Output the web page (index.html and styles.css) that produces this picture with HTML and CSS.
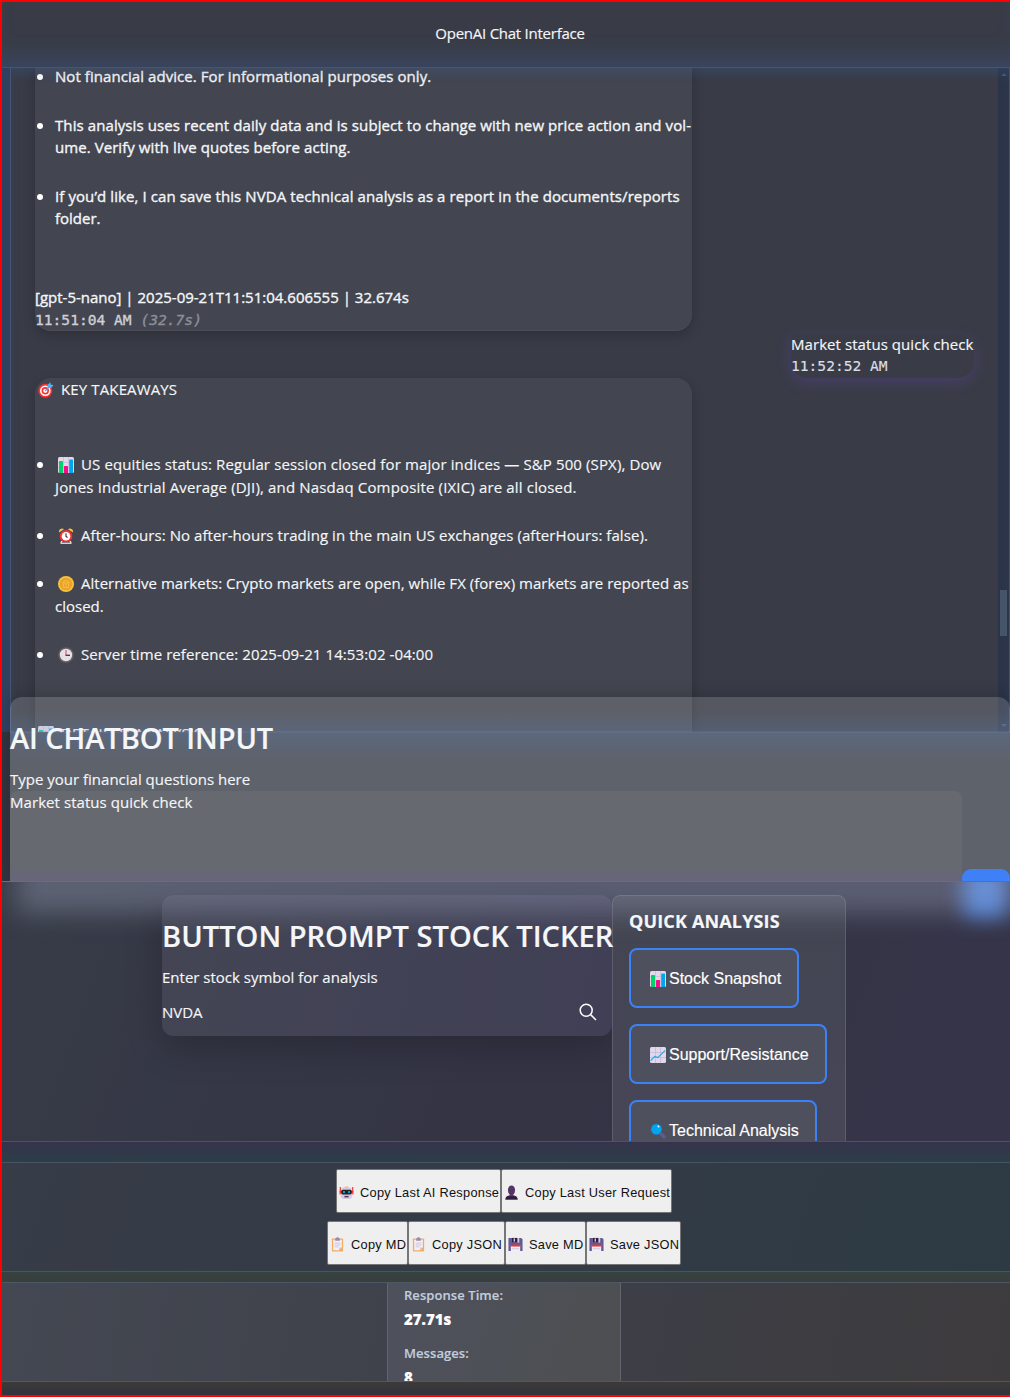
FILE: index.html
```html
<!DOCTYPE html>
<html lang="en">
<head>
<meta charset="utf-8">
<title>OpenAI Chat Interface</title>
<link rel="stylesheet" href="styles.css">
</head>
<body>
<svg class="sprite" aria-hidden="true">
  <symbol id="i-bars" viewBox="0 0 16 16"><rect width="16" height="16" rx="1.5" fill="#e1d8ec"/><path d="M0 5.5h16M0 10.5h16M5.5 0v16M10.5 0v16" stroke="#c3b4d4" stroke-width=".6"/><rect x="1" y="4" width="4" height="12" rx=".6" fill="#00d26a"/><rect x="6" y="9" width="4" height="7" rx=".6" fill="#f70a8d"/><rect x="11.2" y="2.5" width="3.8" height="13.5" rx=".6" fill="#00a6ed"/></symbol>
  <symbol id="i-trend" viewBox="0 0 16 16"><rect width="16" height="16" rx="1.5" fill="#e1d8ec"/><path d="M0 5.5h16M0 10.5h16M5.5 0v16M10.5 0v16" stroke="#c3b4d4" stroke-width=".7"/><path d="M.6 13.6 4.8 9.4l3 1.2 7.4-7.2" fill="none" stroke="#2aa5e0" stroke-width="1.2"/></symbol>
  <symbol id="i-lens" viewBox="0 0 16 16"><path d="m10.500 10.500 3.500 3.300" stroke="#635994" stroke-width="3.4" stroke-linecap="round"/><circle cx="6.4" cy="6.2" r="5.800" fill="#3f5a9c"/><circle cx="6.4" cy="6.2" r="5.2" fill="#00a6ed"/><circle cx="8.5" cy="3.5" r="1" fill="#e8f8ff"/></symbol>
  <symbol id="i-target" viewBox="0 0 16 16"><circle cx="7.3" cy="8.8" r="7" fill="#f8312f"/><circle cx="7.3" cy="8.8" r="5.3" fill="#fff"/><circle cx="7.3" cy="8.8" r="3.7" fill="#f8312f"/><circle cx="7.3" cy="8.8" r="2.1" fill="#fff"/><path d="m7.2 9 4-4.3" stroke="#46a4fb" stroke-width="1.2"/><path d="M9.6 5.8 9.5 3l2.8-2.8.5 2.2 2.8.8L13 6z" fill="#46b4fb"/></symbol>
  <symbol id="i-alarm" viewBox="0 0 16 16"><path d="m4 13-1 2M12 13l1 2" stroke="#ddd" stroke-width="1.6"/><path d="M1 4.5A3.2 3.2 0 0 1 6 1.2zM15 4.5a3.2 3.2 0 0 0-5-3.3z" fill="#f9c23c"/><circle cx="8" cy="8.2" r="6.2" fill="#f8312f"/><circle cx="8" cy="8.2" r="4.3" fill="#fff"/><path d="M8 5.3v3.2l1.6 1" fill="none" stroke="#402a32" stroke-width="1.1"/><path d="M2.5 15.3h11" stroke="#d8d0d8" stroke-width="1.4"/></symbol>
  <symbol id="i-coin" viewBox="0 0 16 16"><circle cx="8" cy="8" r="8" fill="#f9c23c"/><circle cx="8" cy="8" r="6.3" fill="#e8a22e"/><path d="M4.7 6.3 8 4.3l3.3 2v.7H4.7zM5.5 7.5v3M8 7.5v3M10.5 7.5v3M4.7 11.4h6.6" fill="none" stroke="#f9c23c" stroke-width=".9"/></symbol>
  <symbol id="i-clock" viewBox="0 0 16 16"><circle cx="8" cy="8" r="7.8" fill="#636363"/><circle cx="8" cy="8" r="6.2" fill="#e6e0e6"/><path d="M8 3v5" stroke="#d85a80" stroke-width="1.2"/><path d="M7.5 8.3H12" stroke="#332a35" stroke-width="1.2"/></symbol>
  <symbol id="i-robot" viewBox="0 0 16 16"><path d="M1.4 2v6M14.6 2v6" stroke="#f8312f" stroke-width="1.2"/><path d="M.6 6h2v4h-2zM13.4 6h2v4h-2z" fill="#f8312f"/><path d="M5 3q3-3 6 0z" fill="#f9b23c"/><path d="M3 3h10l1.4 7q-.5 5-4.4 5H6q-3.900 0-4.400-5z" fill="#d5cade"/><rect x="2.3" y="5" width="11.400" height="5" rx="1.8" fill="#212121"/><path d="M4.300 7.500h2M9.700 7.500h2" stroke="#00a6ed" stroke-width="2"/><rect x="5.800" y="11.600" width="4.400" height="1.600" fill="#553a64"/></symbol>
  <symbol id="i-user" viewBox="0 0 16 16"><path d="M4.200 5.500a3.800 5 0 0 1 7.600 0q0 3.400-1.900 4.500v1q4.100.6 4.700 4.500H1.400q.6-3.900 4.700-4.500v-1Q4.200 8.900 4.200 5.500z" fill="#533566"/><path d="M1.400 15.500q.5-2.500 2-3.400h9.200q1.500.9 2 3.400z" fill="#321b41"/></symbol>
  <symbol id="i-clip" viewBox="0 0 16 16"><rect x="2" y="1.500" width="12" height="14" rx="1" fill="#f3ad61"/><path d="M3.400 3h9.200v8.200l-3 3H3.400z" fill="#f3eef8"/><path d="M12.600 11.200h-3v3z" fill="#cdc4d6"/><path d="M5.500 1.500 8 0l2.500 1.500V4h-5z" fill="#998ea4"/><path d="M5 6.500h6M5 8.500h6M5 10.500h4" stroke="#c5b9d1" stroke-width=".8"/></symbol>
  <symbol id="i-disk" viewBox="0 0 16 16"><path d="M.500 1h13.500L15.500 2.500V15H.5z" fill="#635994"/><path d="M4 1h8v5H4z" fill="#d3c9dc"/><path d="M4 1h6v5H4z" fill="#321b41"/><path d="M6 1.500h1.500v3.500H6z" fill="#d3c9dc"/><path d="M3 8.500h10V15H3z" fill="#f3eef8"/><path d="M3 8.200h10v2H3z" fill="#f8312f"/><path d="M4 12.500h8" stroke="#cdc4d6"/></symbol>
</svg>
<div class="app">
  <header class="top">OpenAI Chat Interface</header>

  <main class="chat-wrap">
    <div class="chat">
      <div class="messages">
        <article class="msg bot">
          <ul class="points">
            <li><span class="ln a1">Not financial advice. For informational purposes only.</span></li>
            <li><span class="ln a2">This analysis uses recent daily data and is subject to change with new price action and vol-</span><span class="ln a1">ume. Verify with live quotes before acting.</span></li>
            <li><span class="ln a2">If you’d like, I can save this NVDA technical analysis as a report in the documents/reports</span><span class="ln">folder.</span></li>
          </ul>
          <span class="ln">[gpt-5-nano] | 2025-09-21T11:51:04.606555 | 32.674s</span>
          <span class="stamp">11:51:04 AM <em>(32.7s)</em></span>
        </article>
        <article class="msg user">
          <span class="ln a1">Market status quick check</span>
          <span class="stamp">11:52:52 AM</span>
        </article>
        <article class="msg bot second">
          <div class="ln title"><svg class="em"><use href="#i-target"/></svg><span class="b1">KEY TAKEAWAYS</span></div>
          <ul class="points">
            <li><span class="ln b2"><svg class="em"><use href="#i-bars"/></svg>US equities status: Regular session closed for major indices — S&amp;P 500 (SPX), Dow</span><span class="ln b3">Jones Industrial Average (DJI), and Nasdaq Composite (IXIC) are all closed.</span></li>
            <li><span class="ln a1"><svg class="em"><use href="#i-alarm"/></svg>After-hours: No after-hours trading in the main US exchanges (afterHours: false).</span></li>
            <li><span class="ln b5"><svg class="em"><use href="#i-coin"/></svg>Alternative markets: Crypto markets are open, while FX (forex) markets are reported as</span><span class="ln">closed.</span></li>
            <li><span class="ln a2"><svg class="em"><use href="#i-clock"/></svg>Server time reference: 2025-09-21 14:53:02 -04:00</span></li>
          </ul>
          <div class="ln title"><svg class="em"><use href="#i-bars"/></svg><span class="b1">DETAILED ANALYSIS</span></div>
        </article>
      </div>
      <div class="track"><i class="up"></i><i class="thumb"></i><i class="down"></i></div>
    </div>
  </main>

  <section class="ask">
    <div class="ask-box">
      <h2 class="h-ask">AI CHATBOT INPUT</h2>
      <p class="hint">Type your financial questions here</p>
      <div class="ask-row">
        <div class="area">Market status quick check</div>
        <div class="send"></div>
      </div>
    </div>
  </section>

  <section class="tools">
    <div class="ticker">
      <h2 class="h-tick">BUTTON PROMPT STOCK TICKER</h2>
      <p class="hint">Enter stock symbol for analysis</p>
      <div class="symbol"><span>NVDA</span>
        <svg class="search" viewBox="0 0 18 18"><circle cx="7.200" cy="7.200" r="6" /><path d="m11.600 11.600 5.400 5.400"/></svg>
      </div>
    </div>
    <div class="quick">
      <h3>QUICK ANALYSIS</h3>
      <button class="qa q1"><svg><use href="#i-bars"/></svg>Stock Snapshot</button>
      <button class="qa q2"><svg><use href="#i-trend"/></svg>Support/Resistance</button>
      <button class="qa q3"><svg><use href="#i-lens"/></svg>Technical Analysis</button>
    </div>
  </section>

  <div class="band band-a"></div>
  <section class="export">
    <div class="row">
      <button class="ex w165"><svg><use href="#i-robot"/></svg>Copy Last AI Response</button>
      <button class="ex w171"><svg><use href="#i-user"/></svg>Copy Last User Request</button>
    </div>
    <div class="row">
      <button class="ex w81"><svg><use href="#i-clip"/></svg>Copy MD</button>
      <button class="ex w97"><svg><use href="#i-clip"/></svg>Copy JSON</button>
      <button class="ex w81"><svg><use href="#i-disk"/></svg>Save MD</button>
      <button class="ex w95"><svg><use href="#i-disk"/></svg>Save JSON</button>
    </div>
  </section>
  <div class="band band-b"></div>
  <section class="stats">
    <dl class="stat-box">
      <dt>Response Time:</dt><dd>27.71s</dd>
      <dt>Messages:</dt><dd>8</dd>
    </dl>
  </section>
  <div class="band band-c"></div>
</div>
</body>
</html>
```

FILE: styles.css
```css
* { box-sizing: border-box; }
html { background: #30333d; }
body {
  margin: 0;
  overflow: hidden;
  font: 15px/23px "Open Sans", "Noto Sans", sans-serif;
  color: #f5f6f8;
  -webkit-text-stroke: .15px;
}
h2, h3, p, ul, dl, dd { margin: 0; padding: 0; }
.sprite { position: absolute; width: 0; height: 0; }
.app {
  width: 1010px;
  height: 1397px;
  border: 2px solid #f00;
  border-right: 0;
  display: flex;
  flex-direction: column;
  overflow: hidden;
}

.top {
  height: 65px;
  flex: none;
  background: #393c47;
  box-shadow: inset 0 -22px 22px -12px rgba(59, 100, 170, .28);
  text-align: center;
  line-height: 63px;
  padding-left: 8px;
  letter-spacing: -0.25px;
}

/* conversation */
.chat-wrap {
  height: 665px;
  flex: none;
  padding-left: 8px;
  background: #30405e;
  border-top: 1px solid #475670;
}
.chat {
  height: 664px;
  display: flex;
  background: #393c47;
  border-left: 1px solid #475670;
  border-right: 1px solid #3c5278;
  overflow: hidden;
  position: relative;
}
.chat::after {
  content: "";
  position: absolute;
  inset: 0;
  box-shadow: inset 0 8px 12px -4px rgba(59, 100, 170, .28);
}
.messages {
  flex: 1;
  padding: 0 24px;
  display: flex;
  flex-direction: column;
  align-items: flex-start;
}
.msg { flex: none; }
.bot {
  width: 657px;
  background: #434650;
  border-radius: 0 0 16px 16px;
  box-shadow: 0 4px 12px rgba(0, 0, 0, .22);
  line-height: 22px;
  margin-top: -3px;
  height: 266px;
  border-bottom: 1px solid #4a4d58;
  -webkit-text-stroke: .35px;
}
.ln { display: block; white-space: pre; }
.a1 { letter-spacing: .065px; }
.a2 { letter-spacing: .09px; }
.b1 { letter-spacing: .13px; }
.b2 { letter-spacing: .12px; }
.b3 { letter-spacing: .16px; }
.b5 { letter-spacing: .02px; }
.points { padding-left: 20px; list-style: none; }
.points li { position: relative; margin-bottom: 27px; }
.points li::before {
  content: "";
  position: absolute;
  left: -18px;
  top: 9px;
  width: 6px;
  height: 6px;
  border-radius: 50%;
  background: #fff;
}
.bot > .points li:last-child { margin-bottom: 57px; }
.stamp {
  display: block;
  white-space: pre;
  font: 14.6px/24px "DejaVu Sans Mono", "Liberation Mono", monospace;
  color: #cdd0d6;
}
.stamp em { color: #8b8f9a; }
.user {
  align-self: flex-end;
  width: 183px;
  height: 44px;
  margin-top: 3px;
  line-height: 20px;
  border-radius: 4px 16px 16px 16px;
  box-shadow: 0 4px 14px rgba(110, 70, 190, .3);
}
.user .stamp { color: #dcdfe4; }
.second {
  margin-top: 0;
  height: 380px;
  line-height: 23px;
  border-radius: 16px 16px 0 0;
  -webkit-text-stroke: .15px;
}
.second .points { padding-top: 52px; }
.second .points li { margin-bottom: 25px; }
.bot.second > .points li:last-child { margin-bottom: 56px; }
.em {
  width: 16px;
  height: 16px;
  margin: 0 7px 0 3px;
  vertical-align: -3px;
}

.track {
  width: 11px;
  background: #2c3548;
  display: flex;
  flex-direction: column;
  align-items: center;
  padding: 5px 0 5px;
}
.up, .down { border: 3px solid transparent; }
.up { border-top: 0; border-bottom-color: #475569; }
.down { border-bottom: 0; border-top-color: #475569; margin-top: auto; }
.thumb { width: 7px; height: 46px; margin-top: 514px; background: #475569; }

/* question box, slides up over the conversation */
.ask {
  height: 149px;
  flex: none;
  padding-left: 8px;
  position: relative;
  z-index: 1;
  background: #31343e;
}
.ask-box {
  height: 184px;
  margin-top: -35px;
  border-radius: 12px 12px 0 0;
  padding-top: 24px;
  position: relative;
  background:
    linear-gradient(rgba(80, 125, 190, 0) 15px, rgba(80, 125, 190, .2) 34px, rgba(125, 145, 180, .4) 35px, rgba(80, 125, 190, .2) 36px, rgba(80, 125, 190, 0) 64px),
    linear-gradient(rgba(255, 255, 255, .145) 35px, #5e626b 35px);
  box-shadow: 0 -4px 14px rgba(0, 0, 0, .14);
}
h2 { font-size: 29px; line-height: 34px; font-weight: 600; white-space: nowrap; }
.h-ask { letter-spacing: -0.08px; }
.hint { margin-top: 13px; white-space: nowrap; }
.ask-row { display: flex; align-items: flex-end; height: 90px; }
.area {
  width: 952px;
  height: 90px;
  border-radius: 8px 8px 0 0;
  letter-spacing: .06px;
  background: linear-gradient(#666970 74px, #68647b);
}
.send { width: 48px; height: 12px; border-radius: 9px 9px 0 0; background: #3f80f6; }

/* ticker and quick prompts */
.tools {
  height: 261px;
  flex: none;
  padding-top: 13px;
  display: flex;
  align-items: flex-start;
  padding-left: 160px;
  position: relative;
  overflow: hidden;
  border-top: 1px solid #6a7088;
  border-bottom: 1px solid #4c526a;
  background: linear-gradient(110deg, #373b47, #343445 50%, #363449);
}
.tools::before {
  content: "";
  position: absolute;
  z-index: 1;
  left: 14px;
  right: -10px;
  top: -40px;
  height: 71px;
  background: rgba(160, 168, 195, .36);
  filter: blur(13px);
}
.tools::after {
  content: "";
  position: absolute;
  left: 961px;
  top: -20px;
  width: 44px;
  height: 55px;
  border-radius: 8px;
  background: #4a80dc;
  filter: blur(10px);
}
.ticker {
  width: 450px;
  height: 141px;
  flex: none;
  padding-top: 24px;
  border-radius: 12px;
  background: linear-gradient(100deg, #434554, #403f56);
  box-shadow: 0 12px 36px rgba(0, 0, 0, .22);
}
.ticker > *, .quick > * { position: relative; z-index: 2; }
.h-tick { letter-spacing: .03px; }
.symbol { display: flex; justify-content: space-between; align-items: center; margin-top: 12px; padding-right: 15px; }
.search { width: 18px; height: 18px; fill: none; stroke: #fff; stroke-width: 1.5; margin-top: -2px; }
.quick {
  width: 234px;
  height: 300px;
  flex: none;
  padding: 15px 16px;
  border: 1px solid #5c5e6d;
  border-radius: 8px;
  background: linear-gradient(#434552, #474658);
  display: flex;
  flex-direction: column;
  align-items: flex-start;
}
h3 { font-size: 18px; line-height: 21px; margin-bottom: 16px; white-space: nowrap; letter-spacing: .15px; }
.qa {
  height: 60px;
  flex: none;
  margin: 0 0 16px;
  padding: 1px 0 0 19px;
  border: 2px solid #3b82f6;
  border-radius: 8px;
  background: #4e505e;
  color: #fff;
  font: 16px "Liberation Sans", Arial, sans-serif;
  display: flex;
  align-items: center;
  gap: 3px;
  white-space: nowrap;
}
.qa svg { width: 16px; height: 16px; flex: none; }
.q1 { width: 170px; }
.q2 { width: 198px; }
.q3 { width: 188px; }

.band { flex: none; }
.band-a { height: 20px; background: linear-gradient(#36334c, #2c3e47); }
.band-b { height: 10px; background: linear-gradient(#334342, #3d3d39); }
.band-c { height: 13px; background: linear-gradient(#3d3938, #30343e); }

/* export buttons */
.export {
  height: 110px;
  flex: none;
  border: solid #475467;
  border-width: 1px 0;
  background: linear-gradient(110deg, #373c47, #333b46 50%, #2d3a44);
  padding: 6px 4px 0 0;
  display: flex;
  flex-direction: column;
  gap: 8px;
}
.row { display: flex; justify-content: center; }
.ex {
  height: 44px;
  flex: none;
  padding: 2px 0 0 2px;
  border: 1px solid #767676;
  border-radius: 2px;
  background: #efefef;
  color: #111;
  font: 12.8px "Liberation Sans", Arial, sans-serif;
  letter-spacing: .26px;
  display: flex;
  align-items: center;
  gap: 6px;
  white-space: nowrap;
  -webkit-text-stroke: 0;
}
.ex svg { width: 15px; height: 15px; flex: none; }
.w165 { width: 165px; }
.w171 { width: 171px; }
.w81 { width: 81px; }
.w97 { width: 97px; }
.w95 { width: 95px; }

/* session figures */
.stats {
  height: 100px;
  flex: none;
  overflow: hidden;
  border: solid #4b586a;
  border-width: 1px 0;
  background: linear-gradient(100deg, #444852, #3d3f47 60%, #3d3b3d);
  display: flex;
  justify-content: center;
  padding-right: 4px;
}
.stat-box {
  width: 234px;
  height: 130px;
  border: solid #62656d;
  border-width: 0 1px;
  padding: 1px 16px;
  background: linear-gradient(110deg, #4d515c, #4d5055 60%, #4d4e51);
}
dt { font-size: 13px; line-height: 22px; font-weight: 600; color: #c3cddd; letter-spacing: .07px; }
dd { font-size: 15px; line-height: 26px; font-weight: 800; color: #fff; margin-bottom: 10px; }
```
